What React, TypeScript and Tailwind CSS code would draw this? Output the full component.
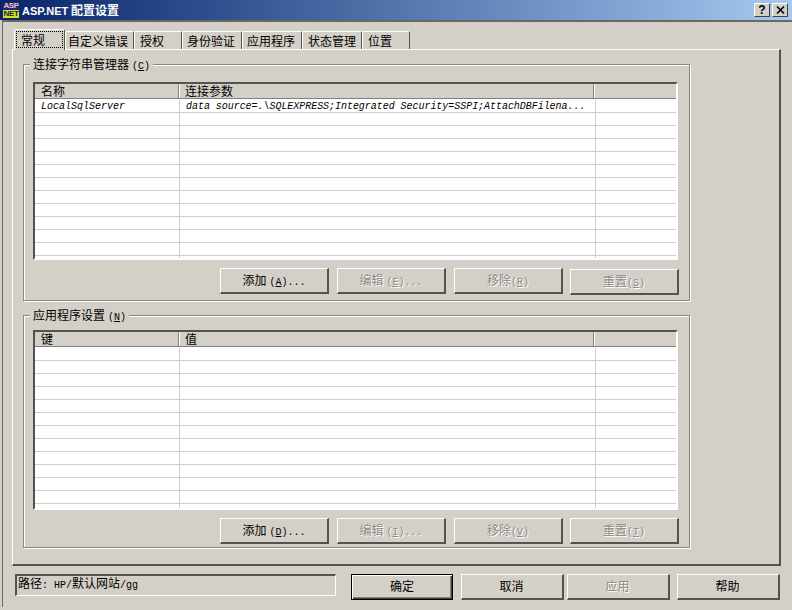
import type { ReactNode } from "react";
import { clsx } from "clsx";

const sans = "font-['Noto_Sans_CJK_SC','Noto_Sans',sans-serif]";

const Ascii = ({ children }: { children: ReactNode }) => (
  <span className="font-['Liberation_Mono',monospace] text-[10px]">{children}</span>
);

const Caption = ({ text, hotkey, suffix, gap }: { text: string; hotkey: string; suffix?: string; gap?: boolean }) => (
  <>
    {text}
    <span className={clsx(gap && "ml-[3px]")}>
      <Ascii>
        (<span className="underline">{hotkey}</span>){suffix}
      </Ascii>
    </span>
  </>
);

const Button = ({
  children,
  width,
  height,
  disabled,
  isDefault,
  className,
}: {
  children: ReactNode;
  width: string;
  height: string;
  disabled?: boolean;
  isDefault?: boolean;
  className?: string;
}) => (
  <div
    className={clsx(
      "flex items-center justify-center shrink-0",
      width,
      height,
      isDefault
        ? "border border-black shadow-[inset_1px_1px_0_#fff,inset_-1px_-1px_0_#404040,inset_-2px_-2px_0_#808080]"
        : "border-t border-l border-t-white border-l-white border-r-2 border-b-2 border-r-[#55534e] border-b-[#55534e]",
      disabled ? "text-[#8c8a85] [text-shadow:1px_1px_0_#fff]" : "text-black",
      className,
    )}
  >
    <span>{children}</span>
  </div>
);

const tabs = [
  { label: "常规", width: "w-[51px]", pad: "pl-[4px]" },
  { label: "自定义错误", width: "w-[69px]", pad: "pl-[2px]" },
  { label: "授权", width: "w-[48px]", pad: "pl-[5px]" },
  { label: "身份验证", width: "w-[60px]", pad: "pl-[4px]" },
  { label: "应用程序", width: "w-[60px]", pad: "pl-[4px]" },
  { label: "状态管理", width: "w-[60px]", pad: "pl-[5px]" },
  { label: "位置", width: "w-[48px]", pad: "pl-[5px]" },
];

const TabStrip = () => (
  <div className="flex items-end h-[27px] pl-[2px]">
    {tabs.map((tab, i) =>
      i === 0 ? (
        <div
          key={tab.label}
          className={clsx(
            tab.width,
            "relative z-10 h-[21px] -mb-px bg-[#d4d0c8] border-t border-l border-r border-t-white border-l-white border-r-[#55534e] rounded-t-[2px] pt-px px-px",
          )}
        >
          <div className={clsx("h-[17px] border border-dotted border-black leading-[15px]", tab.pad)}>{tab.label}</div>
        </div>
      ) : (
        <div
          key={tab.label}
          className={clsx(
            tab.width,
            tab.pad,
            "h-[18px] border-t border-l border-r border-t-white border-l-white border-r-[#55534e] rounded-t-[2px] leading-[18px]",
          )}
        >
          {tab.label}
        </div>
      ),
    )}
  </div>
);

const Group = ({ legend, children, className }: { legend: ReactNode; children: ReactNode; className: string }) => (
  <div
    className={clsx(
      "relative w-[667px] border border-[#8a8880] shadow-[1px_1px_0_#fff,inset_1px_1px_0_#fff] pl-[9px]",
      className,
    )}
  >
    <div className="absolute left-[6px] -top-[8px] bg-[#d4d0c8] px-[3px] leading-[14px]">{legend}</div>
    {children}
  </div>
);

const rowLine = "border-b border-[#cfcfc8]";

const DataTable = ({
  heads,
  rows,
  height,
}: {
  heads: [string, string];
  rows: [string, string][];
  height: string;
}) => (
  <div
    className={clsx(
      "w-[645px] overflow-hidden border-t-2 border-l-2 border-t-[#55534e] border-l-[#55534e] border-r-2 border-b-2 border-r-white border-b-white",
      height,
    )}
  >
    <div className="flex h-[15px] border-b border-[#808080]">
      <div className="w-[144px] border-r border-[#808080] pl-[6px] leading-[14px] shadow-[1px_0_0_#fff]">{heads[0]}</div>
      <div className="w-[415px] border-r border-[#808080] pl-[6px] leading-[14px] shadow-[1px_0_0_#fff]">{heads[1]}</div>
      <div className="flex-1" />
    </div>
    <div className="bg-white pt-px">
      {Array.from({ length: 14 }).map((_, i) => (
        <div key={i} className={clsx("flex h-[13px]", rowLine)}>
          <div className="w-[145px] border-r border-[#cfcfc8] pl-[6px] font-['Liberation_Mono',monospace] italic text-[10px] leading-[13px] text-black">
            {rows[i]?.[0]}
          </div>
          <div className="w-[416px] border-r border-[#cfcfc8] pl-[6px] font-['Liberation_Mono',monospace] italic text-[10px] tracking-[-0.04px] leading-[13px] whitespace-nowrap text-black">
            {rows[i]?.[1]}
          </div>
          <div className="flex-1" />
        </div>
      ))}
    </div>
  </div>
);

const ActionRow = ({ keys, className, lastClassName }: { keys: string[]; className: string; lastClassName?: string }) => (
  <div className={clsx("flex items-start justify-end pr-[10px]", className)}>
    <Button width="w-[109px]" height="h-[26px]" className="pb-px">
      <Caption text="添加" hotkey={keys[0]} suffix="..." gap />
    </Button>
    <Button width="w-[109px]" height="h-[26px]" disabled className="ml-[8px] pb-px">
      <Caption text="编辑" hotkey={keys[1]} suffix="..." gap />
    </Button>
    <Button width="w-[109px]" height="h-[26px]" disabled className="ml-[8px] pb-px">
      <Caption text="移除" hotkey={keys[2]} />
    </Button>
    <Button width="w-[109px]" height="h-[26px]" disabled className={clsx("ml-[7px] pb-px", lastClassName)}>
      <Caption text="重置" hotkey={keys[3]} />
    </Button>
  </div>
);

const AspLogo = () => (
  <div className="w-[16px] h-[16px] shrink-0 ml-[3px] flex flex-col overflow-hidden font-['Liberation_Sans',sans-serif] font-bold text-[8px] leading-[8px] tracking-[-0.4px] text-center">
    <div className="h-[8px] bg-[#1a2a6c] text-[#f0c0d0]">ASP</div>
    <div className="h-[8px] bg-[#d8e020] text-[#10204a]">NET</div>
  </div>
);

const CaptionButton = ({ children, className }: { children: ReactNode; className?: string }) => (
  <div
    className={clsx(
      "w-[16px] h-[14px] bg-[#d4d0c8] flex items-center justify-center border-t border-l border-t-white border-l-white border-r border-b border-r-[#404040] border-b-[#404040]",
      className,
    )}
  >
    {children}
  </div>
);

export default function App() {
  return (
    <div className={clsx("w-[792px] h-[610px] overflow-hidden bg-[#d4d0c8] flex flex-col text-[12px] text-black", sans)}>
      <div className="h-[20px] shrink-0 flex items-center bg-gradient-to-r from-[#0a246a] to-[#a6caf0]">
        <AspLogo />
        <div className="ml-[3px] text-white font-bold leading-[20px]">
          <span className="font-['Liberation_Sans',sans-serif] text-[11px]">ASP.NET</span> 配置设置
        </div>
        <div className="ml-auto flex mr-[4px]">
          <CaptionButton>
            <span className="font-['Liberation_Sans',sans-serif] font-bold text-[12px] leading-[12px]">?</span>
          </CaptionButton>
          <CaptionButton className="ml-[2px]">
            <svg width="9" height="8" viewBox="0 0 9 8">
              <path d="M1 0.5 L8 7.5 M8 0.5 L1 7.5" stroke="#000" strokeWidth="1.6" />
            </svg>
          </CaptionButton>
        </div>
      </div>

      <div className="flex-1 ml-[2px] mb-[3px] border-l border-t-2 border-l-[#6a6862] border-t-[#6a6862] pl-[9px]">
        <TabStrip />
        <div className="w-[769px] h-[517px] border-t border-l border-t-white border-l-white border-r-2 border-b-2 border-r-[#55534e] border-b-[#55534e] pl-[10px] pt-[14px]">
          <Group legend={<Caption text="连接字符串管理器" hotkey="C" gap />} className="h-[237px] pt-[17px]">
            <DataTable
              heads={["名称", "连接参数"]}
              height="h-[178px]"
              rows={[["LocalSqlServer", "data source=.\\SQLEXPRESS;Integrated Security=SSPI;AttachDBFilena..."]]}
            />
            <ActionRow keys={["A", "E", "R", "S"]} className="mt-[8px]" lastClassName="mt-px" />
          </Group>
          <Group legend={<Caption text="应用程序设置" hotkey="N" gap />} className="h-[233px] mt-[14px] pt-[14px]">
            <DataTable heads={["键", "值"]} height="h-[180px]" rows={[]} />
            <ActionRow keys={["D", "I", "V", "T"]} className="mt-[8px]" />
          </Group>
        </div>

        <div className="flex items-start mt-[8px] pl-[3px]">
          <div className="w-[321px] h-[22px] border-t-2 border-l-2 border-t-[#55534e] border-l-[#55534e] border-r border-b border-r-white border-b-white pl-px leading-[14px] whitespace-nowrap">
            路径<Ascii>: HP/</Ascii>默认网站<Ascii>/gg</Ascii>
          </div>
          <Button width="w-[102px]" height="h-[26px]" isDefault className="ml-[15px] pb-[3px]">确定</Button>
          <Button width="w-[103px]" height="h-[26px]" className="ml-[8px] pb-[2px] pr-px">取消</Button>
          <Button width="w-[103px]" height="h-[26px]" disabled className="ml-[3px] pb-[2px] pr-px">应用</Button>
          <Button width="w-[103px]" height="h-[26px]" className="ml-[7px] pb-[2px] pr-px">帮助</Button>
        </div>
      </div>
    </div>
  );
}
